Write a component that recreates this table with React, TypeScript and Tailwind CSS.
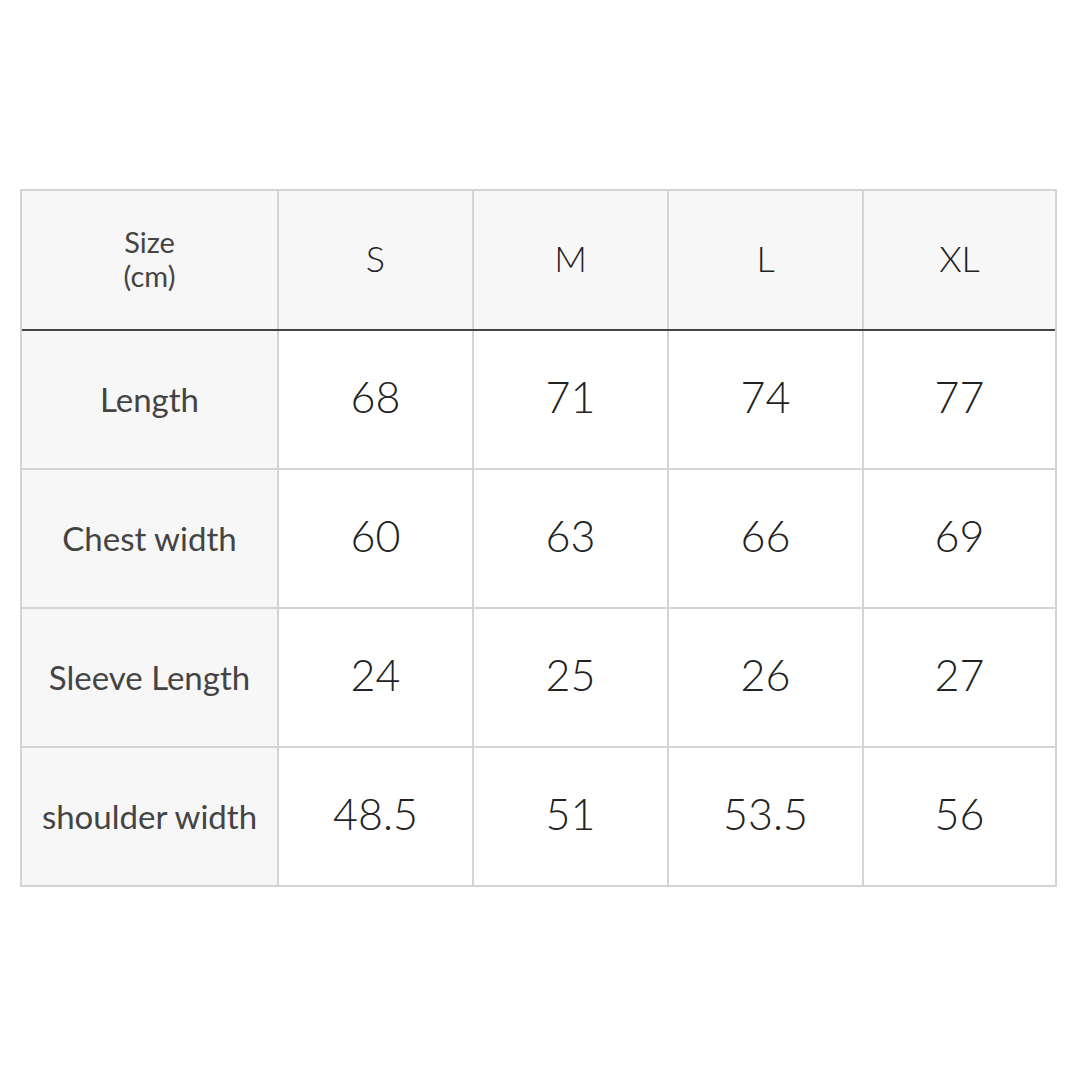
const sizes = ['S', 'M', 'L', 'XL'];

const rows: { label: string; values: string[] }[] = [
  { label: 'Length', values: ['68', '71', '74', '77'] },
  { label: 'Chest width', values: ['60', '63', '66', '69'] },
  { label: 'Sleeve Length', values: ['24', '25', '26', '27'] },
  { label: 'shoulder width', values: ['48.5', '51', '53.5', '56'] },
];

export default function App() {
  return (
    <div
      className="min-h-[1080px] w-[1080px] bg-white pl-[20px] pt-[189px] text-[#222]"
      style={{ fontFamily: 'Lato, "Open Sans", sans-serif' }}
    >
      <div className="w-[1037px] border-2 border-[#d4d4d4]">
        <div className="grid h-[140px] grid-cols-[257px_195px_195px_195px_1fr] border-b-2 border-[#454545] bg-[#f7f7f7]">
          <div className="flex flex-col items-center justify-center border-r-2 border-[#d4d4d4] pb-[2px] text-[29px] leading-[34px] text-[#444]">
            <span>Size</span>
            <span>(cm)</span>
          </div>
          {sizes.map((s, i) => (
            <div
              key={s}
              className={`flex items-center justify-center pb-[4px] text-[36px] font-light ${
                i < sizes.length - 1 ? 'border-r-2 border-[#d4d4d4]' : ''
              }`}
            >
              {s}
            </div>
          ))}
        </div>

        {rows.map((row, ri) => (
          <div
            key={row.label}
            className={`grid grid-cols-[257px_195px_195px_195px_1fr] ${
              ri < rows.length - 1 ? 'h-[139px] border-b-2 border-[#d4d4d4]' : 'h-[137px]'
            }`}
          >
            <div className="flex items-center justify-center border-r-2 border-[#d4d4d4] bg-[#f7f7f7] text-[33px] text-[#444]">
              {row.label}
            </div>
            {row.values.map((v, i) => (
              <div
                key={i}
                className={`flex items-center justify-center pb-[4px] text-[43px] font-light ${
                  i < row.values.length - 1 ? 'border-r-2 border-[#d4d4d4]' : ''
                }`}
              >
                {v}
              </div>
            ))}
          </div>
        ))}
      </div>
    </div>
  );
}
